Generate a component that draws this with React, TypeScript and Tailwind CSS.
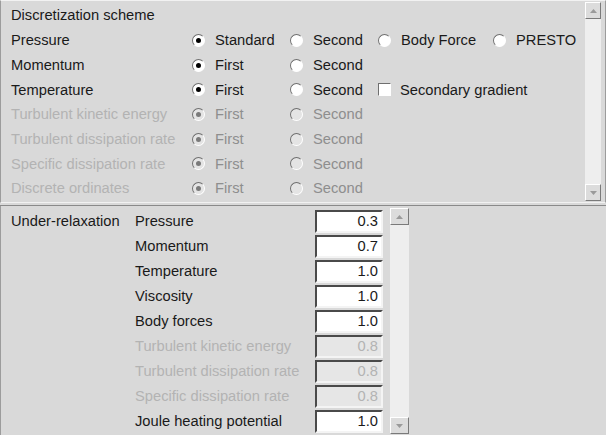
import React from "react";

type Opt = { label: string; checked?: boolean };

interface SchemeRow {
  name: string;
  disabled?: boolean;
  options: (Opt | null)[];
  checkbox?: string;
}

const rows: SchemeRow[] = [
  {
    name: "Pressure",
    options: [
      { label: "Standard", checked: true },
      { label: "Second" },
      { label: "Body Force" },
      { label: "PRESTO" },
    ],
  },
  { name: "Momentum", options: [{ label: "First", checked: true }, { label: "Second" }] },
  {
    name: "Temperature",
    options: [{ label: "First", checked: true }, { label: "Second" }],
    checkbox: "Secondary gradient",
  },
  { name: "Turbulent kinetic energy", disabled: true, options: [{ label: "First", checked: true }, { label: "Second" }] },
  { name: "Turbulent dissipation rate", disabled: true, options: [{ label: "First", checked: true }, { label: "Second" }] },
  { name: "Specific dissipation rate", disabled: true, options: [{ label: "First", checked: true }, { label: "Second" }] },
  { name: "Discrete ordinates", disabled: true, options: [{ label: "First", checked: true }, { label: "Second" }] },
];

const relax = [
  { name: "Pressure", value: "0.3" },
  { name: "Momentum", value: "0.7" },
  { name: "Temperature", value: "1.0" },
  { name: "Viscosity", value: "1.0" },
  { name: "Body forces", value: "1.0" },
  { name: "Turbulent kinetic energy", value: "0.8", disabled: true },
  { name: "Turbulent dissipation rate", value: "0.8", disabled: true },
  { name: "Specific dissipation rate", value: "0.8", disabled: true },
  { name: "Joule heating potential", value: "1.0" },
];

const colWidths = ["w-[98px]", "w-[88px]", "w-[115px]", "w-[90px]"];

function Radio({ checked, disabled }: { checked?: boolean; disabled?: boolean }) {
  return (
    <span
      className={`relative flex h-[13px] w-[13px] shrink-0 items-center justify-center rounded-full border border-t-[#6f6f6f] border-l-[#6f6f6f] border-r-white border-b-white ${
        disabled ? "bg-[#e4e4e4]" : "bg-white"
      }`}
    >
      {checked && (
        <span
          className={`h-[5px] w-[5px] rounded-full ${disabled ? "bg-[#7a7a7a]" : "bg-black"}`}
        />
      )}
    </span>
  );
}

function ScrollArrow({ up }: { up?: boolean }) {
  return (
    <div className="flex h-[17px] w-full items-center justify-center border border-t-white border-l-white border-r-[#7a7a7a] border-b-[#7a7a7a] bg-[#dcdcdc]">
      <svg width="7" height="4" viewBox="0 0 7 4">
        {up ? (
          <polygon points="0,4 7,4 3.5,0" fill="#9a9a9a" />
        ) : (
          <polygon points="0,0 7,0 3.5,4" fill="#9a9a9a" />
        )}
      </svg>
    </div>
  );
}

function Scrollbar({ className }: { className: string }) {
  return (
    <div className={`flex flex-col bg-[#eeeeee] ${className}`}>
      <ScrollArrow up />
      <div className="flex-1" />
      <ScrollArrow />
    </div>
  );
}

export default function App() {
  return (
    <div
      className="flex h-[435px] w-[606px] flex-col bg-[#d9d9d9] text-[14.7px] text-[#1a1a1a]"
      style={{ fontFamily: '"Liberation Sans", Arial, sans-serif' }}
    >
      {/* Discretization */}
      <div className="flex h-[203px] border border-t-[#f2f2f2] border-l-[#9c9c9c] border-r-[#9c9c9c] border-b-[#f2f2f2]">
        <div className="flex-1 pl-[10px] pt-[2px]">
          <div className="flex h-[25px] items-center">Discretization scheme</div>
          {rows.map((r) => (
            <div key={r.name} className="flex h-[24.7px] items-center">
              <div className={`w-[181px] shrink-0 whitespace-nowrap ${r.disabled ? "text-[#b3b3b3]" : ""}`}>
                {r.name}
              </div>
              {r.options.map((o, i) =>
                o ? (
                  <div key={o.label} className={`flex shrink-0 items-center gap-[10px] whitespace-nowrap ${colWidths[i]}`}>
                    <Radio checked={o.checked} disabled={r.disabled} />
                    <span className={r.disabled ? "text-[#8e8e8e]" : ""}>{o.label}</span>
                  </div>
                ) : null
              )}
              {r.checkbox && (
                <div className="flex items-center gap-[9px] whitespace-nowrap">
                  <span className="h-[13px] w-[13px] border border-t-[#6f6f6f] border-l-[#6f6f6f] border-r-white border-b-white bg-white" />
                  <span>{r.checkbox}</span>
                </div>
              )}
            </div>
          ))}
        </div>
        <Scrollbar className="mr-[4px] mt-[1px] mb-[1px] w-[16px]" />
      </div>

      {/* divider */}
      <div className="h-[3px] border-b border-b-[#8a8a8a]" />

      {/* Under-relaxation */}
      <div className="flex flex-1 border-l border-l-[#9c9c9c] pt-[3px]">
        <div className="w-[134px] shrink-0 pl-[10px]">
          <div className="flex h-[25px] items-center whitespace-nowrap">Under-relaxation</div>
        </div>
        <div className="flex flex-col">
          {relax.map((r) => (
            <div key={r.name} className="flex h-[25px] items-center">
              <div className={`w-[180px] shrink-0 whitespace-nowrap ${r.disabled ? "text-[#b3b3b3]" : ""}`}>
                {r.name}
              </div>
              <div
                className={`flex h-[23px] w-[68px] items-center justify-end border-2 border-t-[#4a4a4a] border-l-[#4a4a4a] border-r-[#f4f4f4] border-b-[#f4f4f4] pr-[3px] ${
                  r.disabled ? "bg-[#e6e6e6] text-[#b3b3b3]" : "bg-white"
                }`}
              >
                {r.value}
              </div>
            </div>
          ))}
        </div>
        <Scrollbar className="ml-[7px] mt-[-1px] h-[226px] w-[19px]" />
      </div>
    </div>
  );
}
